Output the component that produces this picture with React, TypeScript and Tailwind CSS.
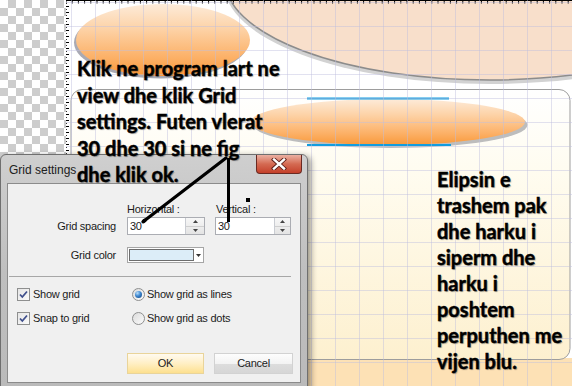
import React from "react";

function Spinner({ w }: { w: string }) {
  return (
    <div className={`${w} flex flex-col border-l border-[#c9ccd2] bg-gradient-to-b from-[#f7f7f7] to-[#e4e4e4]`}>
      <div className="flex flex-1 items-center justify-center border-b border-[#cfcfcf]">
        <svg width="5" height="3" viewBox="0 0 5 3"><path d="M0 3 L2.5 0 L5 3 Z" fill="#444" /></svg>
      </div>
      <div className="flex flex-1 items-center justify-center">
        <svg width="5" height="3" viewBox="0 0 5 3"><path d="M0 0 L2.5 3 L5 0 Z" fill="#444" /></svg>
      </div>
    </div>
  );
}

function CheckBox() {
  return (
    <div className="flex h-[13px] w-[13px] items-center justify-center border border-[#8e8f8f] bg-gradient-to-br from-[#e6e6e6] to-[#fafafa]">
      <svg width="11" height="11" viewBox="0 0 11 11">
        <path d="M2 5.5 L4.3 8 L9 2.5" fill="none" stroke="#3f4f8c" strokeWidth="1.8" />
      </svg>
    </div>
  );
}

function Radio({ checked }: { checked?: boolean }) {
  return (
    <div className="flex h-[13px] w-[13px] items-center justify-center rounded-full border border-[#8e8f8f] bg-gradient-to-br from-[#dcdcdc] to-[#fbfbfb]">
      {checked ? (
        <div className="h-[7px] w-[7px] rounded-full bg-[radial-gradient(circle_at_35%_30%,#b9e0fb_0%,#3d86cf_45%,#0e3f78_100%)]" />
      ) : null}
    </div>
  );
}

export default function App() {
  const topTicks = Array.from({ length: 83 }, (_, i) => 66 + i * 6.2);
  const leftTicks = Array.from({ length: 65 }, (_, i) => i * 6);
  return (
    <div className="relative flex h-[386px] w-[572px] overflow-hidden bg-white">
      {/* transparent checkerboard */}
      <div className="w-[66px] shrink-0 bg-[image:repeating-conic-gradient(#cdcdcd_0%_25%,#ffffff_0%_50%)] bg-[length:16px_16px]" />

      {/* drawing canvas */}
      <div className="relative flex-1">
        <svg className="absolute inset-0" width="506" height="386" viewBox="66 0 506 386">
          <defs>
            <linearGradient id="rr" x1="0" y1="0" x2="0" y2="1">
              <stop offset="0" stopColor="#ffffff" />
              <stop offset="0.3" stopColor="#fffcf0" />
              <stop offset="1" stopColor="#fdf0cf" />
            </linearGradient>
            <linearGradient id="og" x1="0" y1="0" x2="0" y2="1">
              <stop offset="0" stopColor="#fdebd9" />
              <stop offset="0.35" stopColor="#fdd2a6" />
              <stop offset="0.75" stopColor="#fcb066" />
              <stop offset="1" stopColor="#f9993a" />
            </linearGradient>
          </defs>
          <rect x="66" y="358" width="506" height="28" fill="#fde1b5" />
          <rect x="71" y="89.5" width="499" height="270" rx="11" fill="url(#rr)" stroke="#9d9d9d" strokeWidth="1" />
          <ellipse cx="490" cy="-16" rx="266" ry="100" fill="#d2d2d2" />
          <ellipse cx="490" cy="-20" rx="265" ry="100" fill="#f8dfcb" stroke="#8c8c8c" strokeWidth="1.5" />
          <ellipse cx="161" cy="42.5" rx="87" ry="36" fill="#a9aab4" />
          <ellipse cx="163" cy="40" rx="87" ry="36" fill="url(#og)" />
          <ellipse cx="390.5" cy="125" rx="137" ry="23" fill="#bdbdbd" />
          <ellipse cx="388" cy="122" rx="137" ry="23" fill="url(#og)" />
          <line x1="307" y1="98.5" x2="449" y2="98.5" stroke="#129ddf" strokeWidth="2" />
          <line x1="307" y1="145" x2="451" y2="145" stroke="#129ddf" strokeWidth="2" />
          <line x1="66" y1="0.5" x2="572" y2="0.5" stroke="#000" strokeWidth="1" />
          {topTicks.map((x) => (
            <line key={x} x1={x} y1="0" x2={x} y2="3.5" stroke="#000" strokeWidth="1" />
          ))}
          <line x1="66.5" y1="0" x2="66.5" y2="386" stroke="#333" strokeWidth="1" strokeDasharray="1 2" />
          {leftTicks.map((y) => (
            <line key={y} x1="66" y1={y + 0.5} x2="69" y2={y + 0.5} stroke="#000" strokeWidth="1" />
          ))}
        </svg>
        {/* editor grid overlay */}
        <div className="pointer-events-none absolute inset-0 bg-[image:linear-gradient(to_right,rgba(190,190,222,0.45)_1px,transparent_1px),linear-gradient(to_bottom,rgba(190,190,222,0.45)_1px,transparent_1px)] bg-[length:24px_24px] bg-[position:5px_2px]" />
      </div>

      {/* Grid settings dialog */}
      <div className="absolute left-0 top-[154px] h-[236px] w-[308px] rounded-t-[6px] border border-[#6f6f6f] bg-gradient-to-b from-[#cfcfcf] via-[#bfbfbf] to-[#bababa] font-['Liberation_Sans',Arial,sans-serif] text-[11px] tracking-[-0.25px] text-[#1b1b1b] shadow-[3px_2px_6px_rgba(0,0,0,0.4)]">
        <div className="flex h-[28px] items-start justify-between">
          <span className="pl-[8px] pt-[6px] text-[12px] tracking-normal text-[#202020]">Grid settings</span>
          <div className="mr-[5px] flex h-[19px] w-[46px] items-center justify-center rounded-b-[4px] border border-t-0 border-[#6a2a22] bg-gradient-to-b from-[#eab0a2] via-[#d46a52] to-[#c43f2a]">
            <svg width="16" height="12" viewBox="0 0 16 12">
              <path d="M3 1.5 L13 10.5 M13 1.5 L3 10.5" stroke="#5a1e18" strokeWidth="4.2" strokeLinecap="square" />
              <path d="M3 1.5 L13 10.5 M13 1.5 L3 10.5" stroke="#ffffff" strokeWidth="2.4" strokeLinecap="square" />
            </svg>
          </div>
        </div>
        <div className="mx-[6px] h-[200px] border border-[#8b8b8b] bg-[#f0f0f0]">
          <div className="flex flex-col pt-[19px]">
            <div className="flex h-[13px] leading-[13px]">
              <span className="w-[119px]" />
              <span className="w-[89px]">Horizontal :</span>
              <span>Vertical :</span>
            </div>
            <div className="mt-[1px] flex h-[18px] items-center">
              <span className="w-[119px] pr-[11px] text-right">Grid spacing</span>
              <div className="flex h-[18px] w-[78px] border border-[#abadb3] bg-white">
                <span className="flex-1 pl-[2px] leading-[16px]">30</span>
                <Spinner w="w-[19px]" />
              </div>
              <div className="ml-[10px] flex h-[18px] w-[76px] border border-[#abadb3] bg-white">
                <span className="flex-1 pl-[2px] leading-[16px]">30</span>
                <Spinner w="w-[16px]" />
              </div>
            </div>
            <div className="mt-[12px] flex h-[16px] items-center">
              <span className="w-[119px] pr-[11px] text-right">Grid color</span>
              <div className="flex h-[16px] w-[77px] border border-[#a5a5a5] bg-white p-[1px]">
                <div className="flex-1 border border-[#6d6d6d] bg-[#dcedf8]" />
                <div className="flex w-[8px] items-center justify-center">
                  <svg width="5" height="3" viewBox="0 0 5 3"><path d="M0 0 L2.5 3 L5 0 Z" fill="#333" /></svg>
                </div>
              </div>
            </div>
            <div className="ml-[1px] mr-[9px] mt-[13px] h-px bg-[#a7a7a7]" />
            <div className="mt-[11px] flex h-[13px] items-center">
              <div className="flex w-[124px] items-center gap-[3px] pl-[9px]">
                <CheckBox />
                <span>Show grid</span>
              </div>
              <div className="flex items-center gap-[2px]">
                <Radio checked />
                <span>Show grid as lines</span>
              </div>
            </div>
            <div className="mt-[11px] flex h-[13px] items-center">
              <div className="flex w-[124px] items-center gap-[3px] pl-[9px]">
                <CheckBox />
                <span>Snap to grid</span>
              </div>
              <div className="flex items-center gap-[2px]">
                <Radio />
                <span>Show grid as dots</span>
              </div>
            </div>
            <div className="mt-[28px] flex h-[21px] pl-[119px]">
              <div className="flex w-[77px] items-center justify-center border border-[#e9d49a] bg-gradient-to-b from-[#fffaf0] via-[#ffefc4] to-[#fde08e]">OK</div>
              <div className="ml-[10px] flex w-[79px] items-center justify-center border border-[#d2d2d2] bg-[linear-gradient(#fdfdfd_0%,#f3f3f3_50%,#dddddd_51%,#d6d6d6_100%)]">Cancel</div>
            </div>
          </div>
        </div>
      </div>

      {/* text boxes on the canvas */}
      <div className="absolute left-[77px] top-[55px] font-['Lato','Liberation_Sans',sans-serif] text-[20px] font-bold leading-[26.5px] text-black [-webkit-text-stroke:0.45px_#000] [text-shadow:1px_1px_1px_rgba(0,0,0,0.35)]">
        Klik ne program lart ne
        <br />
        view dhe klik Grid
        <br />
        settings. Futen vlerat
        <br />
        30 dhe 30 si ne fig
        <br />
        dhe klik ok.
      </div>
      <div className="absolute left-[437px] top-[166px] font-['Lato','Liberation_Sans',sans-serif] text-[20px] font-bold leading-[26px] text-black [-webkit-text-stroke:0.45px_#000] [text-shadow:1px_1px_1px_rgba(0,0,0,0.35)]">
        Elipsin e
        <br />
        trashem pak
        <br />
        dhe harku i
        <br />
        siperm dhe
        <br />
        harku i
        <br />
        poshtem
        <br />
        perputhen me
        <br />
        vijen blu.
      </div>

      {/* hand-drawn annotation lines */}
      <svg className="pointer-events-none absolute inset-0" width="572" height="386" viewBox="0 0 572 386">
        <line x1="144" y1="221" x2="226" y2="158" stroke="#000" strokeWidth="3.2" strokeLinecap="round" />
        <ellipse cx="144" cy="221" rx="3" ry="2" fill="#000" transform="rotate(-38 144 221)" />
        <line x1="228.5" y1="158" x2="228.5" y2="222" stroke="#000" strokeWidth="3" />
        <rect x="246" y="198" width="4" height="4" fill="#000" />
      </svg>
    </div>
  );
}
